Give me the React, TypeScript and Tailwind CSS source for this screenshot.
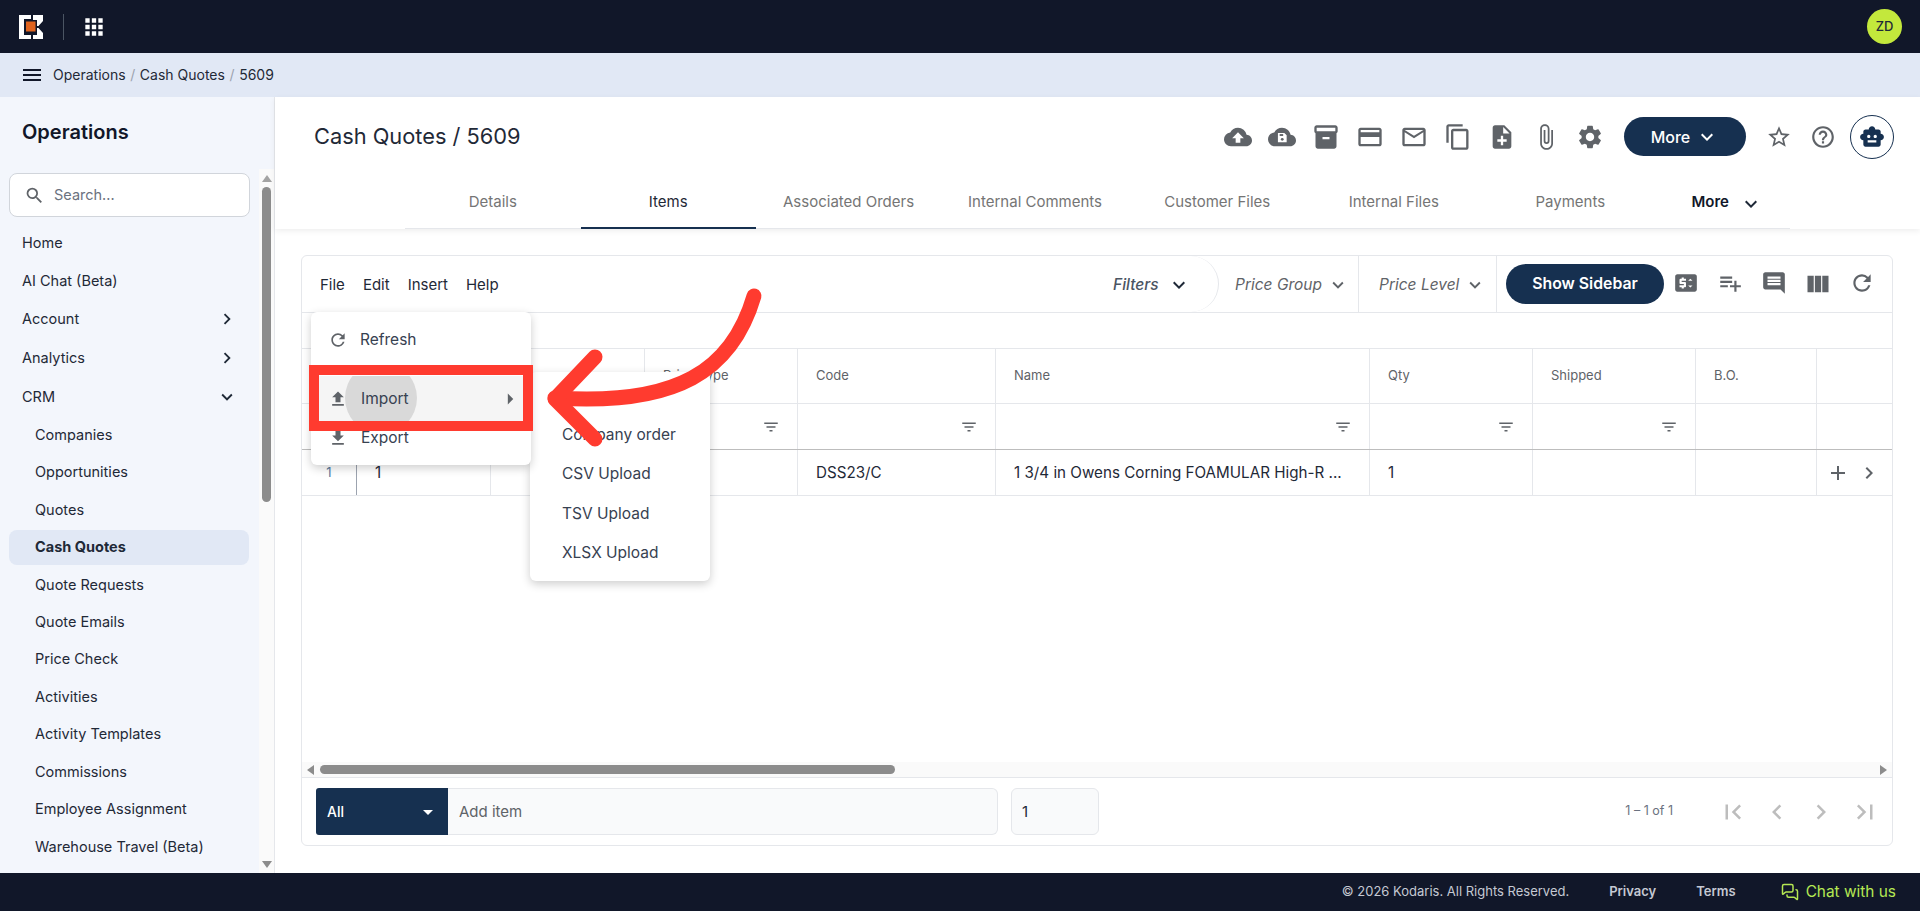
import React from "react";
import {
  MdAdd,
  MdApps,
  MdArrowDropDown,
  MdArrowRight,
  MdAttachFile,
  MdChevronLeft,
  MdChevronRight,
  MdCloudUpload,
  MdComment,
  MdContentCopy,
  MdExpandMore,
  MdFileDownload,
  MdFileUpload,
  MdFilterList,
  MdFirstPage,
  MdHelpOutline,
  MdInventory2,
  MdKeyboardArrowDown,
  MdKeyboardArrowRight,
  MdLastPage,
  MdMenu,
  MdNoteAdd,
  MdOutlineCreditCard,
  MdOutlineEmail,
  MdPlaylistAdd,
  MdPriceChange,
  MdRefresh,
  MdSearch,
  MdSettings,
  MdSmartToy,
  MdStarBorder,
  MdViewColumn,
} from "react-icons/md";
import { MessagesSquare } from "lucide-react";

const crmItems = [
  "Companies",
  "Opportunities",
  "Quotes",
  "Cash Quotes",
  "Quote Requests",
  "Quote Emails",
  "Price Check",
  "Activities",
  "Activity Templates",
  "Commissions",
  "Employee Assignment",
  "Warehouse Travel (Beta)",
];

const tabs = [
  "Details",
  "Items",
  "Associated Orders",
  "Internal Comments",
  "Customer Files",
  "Internal Files",
  "Payments",
];

const columns = [
  { w: "w-[55px]", label: "", filter: false },
  { w: "w-[134px]", label: "", filter: false },
  { w: "w-[154px]", label: "", filter: true },
  { w: "w-[153px]", label: "Price Type", filter: true },
  { w: "w-[198px]", label: "Code", filter: true },
  { w: "w-[374px]", label: "Name", filter: true },
  { w: "w-[163px]", label: "Qty", filter: true },
  { w: "w-[163px]", label: "Shipped", filter: true },
  { w: "w-[121px]", label: "B.O.", filter: false },
];

const cells = [
  "",
  "1",
  "",
  "",
  "DSS23/C",
  "1 3/4 in Owens Corning FOAMULAR High-R ...",
  "1",
  "",
  "",
];

function KodarisLogo() {
  return (
    <svg width="24" height="24" viewBox="0 0 24 24">
      <polygon fill="#fff" points="0,0 12,0 12,4 5,4 5,20 12,20 12,24 0,24" />
      <polygon fill="#fff" points="14,0 24,0 24,6 19.5,11 18,11 18,5 14,5" />
      <polygon fill="#fff" points="18,13 19.5,13 24,18 24,24 14,24 14,20 18,20" />
      <rect x="7" y="6.5" width="9.5" height="10" fill="#e0641f" />
    </svg>
  );
}

function CloudSave() {
  return (
    <svg width="28" height="28" viewBox="0 0 24 24">
      <path
        fill="#5f6368"
        d="M19.35 10.04C18.67 6.59 15.64 4 12 4 9.11 4 6.6 5.64 5.35 8.04 2.34 8.36 0 10.91 0 14c0 3.31 2.69 6 6 6h13c2.76 0 5-2.24 5-5 0-2.64-2.05-4.78-4.65-4.96z"
      />
      <path fill="#fff" d="M8.5 8.5h5.5l2 2v6h-7.5z" />
      <rect x="10" y="9.5" width="3" height="1.6" fill="#5f6368" />
      <circle cx="12.2" cy="14" r="1.2" fill="#5f6368" />
    </svg>
  );
}

export default function App() {
  return (
    <div className="h-screen flex flex-col overflow-hidden bg-white font-['Inter',sans-serif] text-[15px] text-[#1f2937]">
      {/* Top bar */}
      <header className="h-[53px] shrink-0 bg-[#111729] flex items-center pl-[19px] pr-[18px]">
        <KodarisLogo />
        <div className="ml-[20px] w-px h-[26px] bg-[#4b5563]" />
        <MdApps className="ml-[17px] text-white" size={26} />
        <div className="ml-auto w-[35px] h-[35px] rounded-full bg-[#c3e83c] flex items-center justify-center text-[13px] font-medium text-[#1f2937]">
          ZD
        </div>
      </header>

      {/* Breadcrumb */}
      <div className="h-[44px] shrink-0 bg-[#e1e8f5] flex items-center pl-[20px]">
        <MdMenu size={24} className="text-[#111729]" />
        <div className="ml-[9px] pb-[1px] flex items-center gap-[4.6px] text-[14px] text-[#1f2937]">
          <span>Operations</span>
          <span className="text-[#9ca3af]">/</span>
          <span>Cash Quotes</span>
          <span className="text-[#9ca3af]">/</span>
          <span>5609</span>
        </div>
      </div>

      <div className="flex-1 flex min-h-0">
        {/* Sidebar */}
        <aside className="w-[275px] shrink-0 bg-[#f3f6fc] border-r border-[#e5e7eb] flex flex-col text-[14.5px]">
          <h2 className="h-[72px] shrink-0 pl-[22px] pt-[22px] text-[20px] leading-[26px] font-semibold text-[#111729]">
            Operations
          </h2>
          <div className="flex-1 flex min-h-0">
            <div className="w-[259px] shrink-0 overflow-hidden">
              <div className="mt-[4px] mx-[9px] h-[44px] bg-white border border-[#d1d5db] rounded-lg flex items-center pl-[14px] text-[#6b7280]">
                <MdSearch size={21} className="text-[#5f6368]" />
                <span className="ml-[9px]">Search...</span>
              </div>
              <div className="mt-[7px] pl-[22px] h-[38px] flex items-center">Home</div>
              <div className="pl-[22px] h-[38px] flex items-center">AI Chat (Beta)</div>
              <div className="pl-[22px] pr-[21px] h-[38.5px] flex items-center justify-between">
                Account
                <MdKeyboardArrowRight size={22} />
              </div>
              <div className="pl-[22px] pr-[21px] h-[39.5px] flex items-center justify-between">
                Analytics
                <MdKeyboardArrowRight size={22} />
              </div>
              <div className="pl-[22px] pr-[21px] h-[38px] flex items-center justify-between">
                CRM
                <MdKeyboardArrowDown size={22} />
              </div>
              {crmItems.map((item) => (
                <div key={item} className="h-[37.45px] flex items-center">
                  <div
                    className={
                      item === "Cash Quotes"
                        ? "mx-[9px] w-[240px] h-[35px] rounded-lg bg-[#e1e8f5] flex items-center pl-[26px] font-bold"
                        : "pl-[35px]"
                    }
                  >
                    {item}
                  </div>
                </div>
              ))}
            </div>
            <div className="w-[15px] bg-[#fafafa] flex flex-col items-center">
              <svg width="10" height="7" viewBox="0 0 10 7" className="mt-[6px]">
                <polygon points="5,0 10,7 0,7" fill="#a3a3a3" />
              </svg>
              <div className="mt-[5px] w-[9px] h-[315px] rounded-[5px] bg-[#8c8c8c]" />
              <svg width="10" height="7" viewBox="0 0 10 7" className="mt-auto mb-[5px]">
                <polygon points="0,0 10,0 5,7" fill="#8c8c8c" />
              </svg>
            </div>
          </div>
        </aside>

        {/* Main */}
        <main className="flex-1 min-w-0 flex flex-col">
          <div className="h-[132px] shrink-0 shadow-[0_2px_6px_rgba(0,0,0,0.07)]">
            <div className="h-[78px] flex items-center pl-[39px] pr-[26px] pt-[1px]">
              <h1 className="text-[21.8px] font-normal text-[#1f2937]">Cash Quotes / 5609</h1>
              <div className="ml-auto flex items-center text-[#5f6368]">
                {[
                  <MdCloudUpload size={28} key="a" />,
                  <CloudSave key="b" />,
                  <MdInventory2 size={28} key="c" />,
                  <MdOutlineCreditCard size={28} key="d" />,
                  <MdOutlineEmail size={28} key="e" />,
                  <MdContentCopy size={28} key="f" />,
                  <MdNoteAdd size={28} key="g" />,
                  <MdAttachFile size={28} key="h" />,
                  <MdSettings size={28} key="i" />,
                ].map((icon, i) => (
                  <div key={i} className="w-[44px] flex justify-center">
                    {icon}
                  </div>
                ))}
                <button className="ml-[12px] w-[122px] h-[39px] rounded-full bg-[#163050] text-white text-[16px] font-medium flex items-center justify-center gap-[5px]">
                  More
                  <MdExpandMore size={24} />
                </button>
                <div className="ml-[11px] w-[44px] flex justify-center">
                  <MdStarBorder size={26} />
                </div>
                <div className="w-[44px] flex justify-center">
                  <MdHelpOutline size={26} />
                </div>
                <div className="ml-[5px] w-[44px] h-[44px] rounded-full border border-[#163050] flex items-center justify-center">
                  <MdSmartToy size={26} className="text-[#163050]" />
                </div>
              </div>
            </div>
            <div className="ml-[130px] w-[1385px] h-[54px] border-b border-[#e5e7eb] flex text-[15px] text-[#757575]">
              {tabs.map((tab) => (
                <div
                  key={tab}
                  className={
                    tab === "Items"
                      ? "min-w-[175.5px] px-[27px] pt-[2px] flex items-center justify-center text-[#1f2937] border-b-2 border-[#163050] -mb-px"
                      : tab === "Details"
                        ? "min-w-[175.5px] px-[27px] pt-[2px] flex items-center justify-center"
                        : "min-w-[176.5px] px-[27px] pt-[2px] flex items-center justify-center"
                  }
                >
                  {tab}
                </div>
              ))}
              <div className="pl-[33px] pt-[2px] flex items-center font-semibold text-[#111729]">
                More
                <MdExpandMore size={24} className="ml-[10px] mt-[3px] text-[#1f2937]" />
              </div>
            </div>
          </div>

          <div className="flex-1 min-h-0 pt-[26px] pb-[27px] pl-[26px] pr-[27px]">
            <div className="relative h-full border border-[#e5e7eb] rounded-md flex flex-col">
              {/* Toolbar */}
              <div className="h-[57px] shrink-0 border-b border-[#e5e7eb] flex items-center">
                <div className="pl-[18px] pt-[2px] flex gap-[18px] text-[#1f2937]">
                  <span>File</span>
                  <span>Edit</span>
                  <span>Insert</span>
                  <span>Help</span>
                </div>
                <div className="ml-auto h-full flex items-center">
                  <div className="h-full w-[129px] pl-[23px] pt-[1px] rounded-r-[30px] border-r border-[#e5e7eb] flex items-center italic text-[15.5px] font-medium text-[#4b5563]">
                    Filters
                    <MdKeyboardArrowDown size={24} className="ml-[8px] text-[#1f2937]" />
                  </div>
                  <div className="h-full w-[140px] pl-[16px] pt-[1px] border-r border-[#e5e7eb] flex items-center italic text-[15.5px] text-[#5f6368]">
                    Price Group
                    <MdKeyboardArrowDown size={22} className="ml-[5px]" />
                  </div>
                  <div className="h-full w-[138px] pl-[20px] pt-[1px] border-r border-[#e5e7eb] flex items-center italic text-[15.5px] text-[#5f6368]">
                    Price Level
                    <MdKeyboardArrowDown size={22} className="ml-[5px]" />
                  </div>
                  <button className="ml-[9px] w-[158px] h-[40px] rounded-full bg-[#163050] text-white text-[15.8px] font-semibold">
                    Show Sidebar
                  </button>
                  <div className="flex pr-[8px] text-[#5f6368]">
                    {[
                      <MdPriceChange size={26} key="a" />,
                      <MdPlaylistAdd size={26} key="b" />,
                      <MdComment size={26} key="c" />,
                      <MdViewColumn size={28} key="d" />,
                      <MdRefresh size={26} key="e" />,
                    ].map((icon, i) => (
                      <div key={i} className="w-[44px] flex justify-center">
                        {icon}
                      </div>
                    ))}
                  </div>
                </div>
              </div>

              {/* Table */}
              <div className="h-[36px] shrink-0 border-b border-[#e5e7eb]" />
              <div className="h-[55px] shrink-0 flex border-b border-[#e5e7eb] text-[13px] text-[#5f6368]">
                {columns.map((c, i) => (
                  <div key={i} className={`${c.w} shrink-0 border-r border-[#e5e7eb] pl-[18px] flex items-center`}>
                    {c.label}
                  </div>
                ))}
              </div>
              <div className="h-[46px] shrink-0 flex border-b border-[#bdbdbd] text-[#5f6368]">
                {columns.map((c, i) => (
                  <div key={i} className={`${c.w} shrink-0 border-r border-[#e5e7eb] flex items-center justify-end pr-[17px]`}>
                    {c.filter && <MdFilterList size={18} />}
                  </div>
                ))}
              </div>
              <div className="h-[46px] shrink-0 flex border-b border-[#e5e7eb] text-[15.2px] text-[#1f2937]">
                <div className="w-[55px] shrink-0 border-r border-[#9ca3af] flex items-center justify-center text-[13px] text-[#5b7a9d]">
                  1
                </div>
                {columns.slice(1).map((c, i) => (
                  <div key={i} className={`${c.w} shrink-0 border-r border-[#e5e7eb] pl-[18px] pt-[1px] flex items-center`}>
                    <span className="truncate">{cells[i + 1]}</span>
                  </div>
                ))}
                <div className="flex-1 flex items-center pl-[9px] gap-[7px] text-[#5f6368]">
                  <MdAdd size={24} />
                  <MdKeyboardArrowRight size={24} />
                </div>
              </div>
              <div className="flex-1" />

              {/* Horizontal scrollbar */}
              <div className="h-[15px] shrink-0 bg-[#fafafa] flex items-center pl-[5px] pr-[5px]">
                <svg width="7" height="10" viewBox="0 0 7 10">
                  <polygon points="7,0 7,10 0,5" fill="#8c8c8c" />
                </svg>
                <div className="ml-[6px] w-[575px] h-[9px] rounded-[5px] bg-[#8c8c8c]" />
                <svg width="7" height="10" viewBox="0 0 7 10" className="ml-auto">
                  <polygon points="0,0 0,10 7,5" fill="#8c8c8c" />
                </svg>
              </div>

              {/* Add item row */}
              <div className="flex-[0_0_68px] border-t border-[#e5e7eb] flex items-center pl-[14px] pr-[12px]">
                <div className="w-[132px] h-[47px] bg-[#163050] rounded-l-[3px] flex items-center justify-between pl-[11px] pr-[8px] text-white text-[14px] font-medium">
                  All
                  <MdArrowDropDown size={24} />
                </div>
                <div className="w-[550px] h-[47px] bg-[#f9fafb] border border-l-0 border-[#e5e7eb] rounded-r-md flex items-center pl-[11px] pt-[1px] text-[#5f6368]">
                  Add item
                </div>
                <div className="ml-[13px] w-[88px] h-[47px] bg-[#f9fafb] border border-[#e5e7eb] rounded-md flex items-center pl-[10px] pt-[1px]">
                  1
                </div>
                <span className="ml-auto text-[12.5px] text-[#6b7280]">1 – 1 of 1</span>
                <div className="ml-[45px] flex gap-[14px] text-[#bdbdbd]">
                  <MdFirstPage size={30} />
                  <MdChevronLeft size={30} />
                  <MdChevronRight size={30} />
                  <MdLastPage size={30} />
                </div>
              </div>

              {/* File menu */}
              <div className="absolute left-[9px] top-[56px] w-[220px] h-[153px] bg-white rounded-md shadow-[0_3px_10px_rgba(0,0,0,0.2)] z-20 text-[15.5px] text-[#374151]">
                <div className="absolute top-[8px] left-0 right-0 h-[39px] flex items-center pl-[17px] gap-[12px]">
                  <MdRefresh size={20} className="text-[#5f6368]" />
                  Refresh
                </div>
                <div className="absolute top-[64px] left-[8px] right-[8px] h-[45px] bg-[#f5f5f5] overflow-hidden flex items-center pl-[9px] gap-[13px]">
                  <div className="absolute left-[26px] top-[-14px] w-[72px] h-[72px] rounded-full bg-[#d9d9d9]" />
                  <MdFileUpload size={20} className="relative text-[#5f6368]" />
                  <span className="relative">Import</span>
                  <MdArrowRight size={26} className="absolute right-[0px] text-[#5f6368]" />
                </div>
                <div className="absolute top-[106px] left-0 right-0 h-[39px] flex items-center pl-[17px] gap-[13px]">
                  <MdFileDownload size={20} className="text-[#5f6368]" />
                  Export
                </div>
              </div>

              {/* Import submenu */}
              <div className="absolute left-[228px] top-[116px] w-[180px] h-[209px] bg-white rounded-md shadow-[0_3px_10px_rgba(0,0,0,0.2)] z-10 pt-[43px] pl-[32px] text-[15.5px] text-[#374151]">
                {["Company order", "CSV Upload", "TSV Upload", "XLSX Upload"].map((label) => (
                  <div key={label} className="h-[39.4px] flex items-center">
                    {label}
                  </div>
                ))}
              </div>

              {/* Highlight box and arrow */}
              <div className="absolute left-[7px] top-[109px] w-[224px] h-[66px] border-[10px] border-[#ff3b2f] z-30" />
              <svg
                className="absolute left-[220px] top-[20px] z-30 pointer-events-none"
                width="260"
                height="190"
                viewBox="220 20 260 190"
                fill="none"
              >
                <path
                  d="M452 40 C 430 115, 375 150, 253 142"
                  stroke="#ff3b2f"
                  strokeWidth="15"
                  strokeLinecap="round"
                />
                <path
                  d="M293 101 L 253 143 L 293 183"
                  stroke="#ff3b2f"
                  strokeWidth="15"
                  strokeLinecap="round"
                  strokeLinejoin="round"
                />
              </svg>
            </div>
          </div>
        </main>
      </div>

      {/* Footer */}
      <footer className="h-[38px] shrink-0 bg-[#111729] flex items-center justify-end pr-[24px] text-[13px] text-[#c5c9d3]">
        <span>© 2026 Kodaris. All Rights Reserved.</span>
        <span className="ml-[40px] font-semibold">Privacy</span>
        <span className="ml-[40px] font-semibold">Terms</span>
        <span className="ml-[45px] flex items-center gap-[7px] text-[15.4px] text-[#b5e853]">
          <MessagesSquare size={18} />
          Chat with us
        </span>
      </footer>
    </div>
  );
}
